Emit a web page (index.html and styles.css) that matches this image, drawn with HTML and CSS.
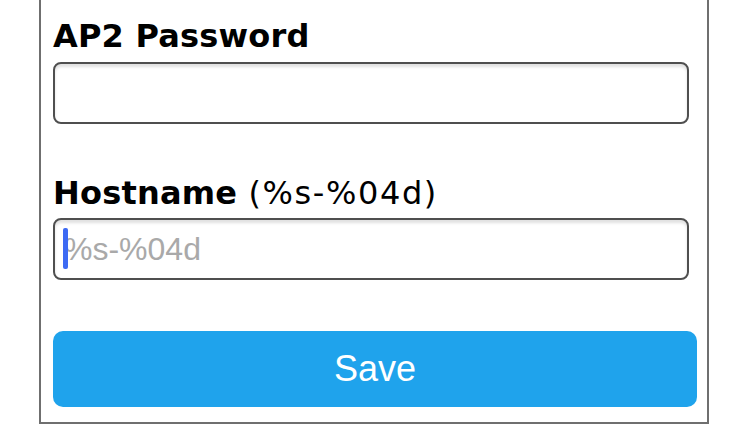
FILE: index.html
```html
<!DOCTYPE html>
<html lang="en">
<head>
    <meta charset="UTF-8">
    <meta name="viewport" content="width=device-width, initial-scale=1.0">
    <title>Config</title>
    <link rel="stylesheet" href="styles.css">
</head>
<body>
    <div class="wrap">
        <form class="config" method="get" action="wifisave">
            <label class="field-label" for="ap2pass">AP2 Password</label>
            <input type="password" id="ap2pass" name="ap2pass" class="field">

            <label class="field-label" for="host">Hostname <span class="hint">(%s-%04d)</span></label>
            <div class="field-box">
                <input type="text" id="host" name="host" class="field" placeholder="%s-%04d">
                <span class="caret"></span>
            </div>

            <button type="submit" class="save">Save</button>
        </form>
    </div>
</body>
</html>
```

FILE: styles.css
```css
body {
    margin: 0;
    padding: 0;
    background: #fff;
    font-family: "DejaVu Sans", Verdana, sans-serif;
}
.wrap {
    margin-left: 39px;
    width: 644px;
    padding: 18px 10px 15px 12px;
    border: 2px solid #6f6f6f;
    border-top: none;
}
.field-label {
    display: block;
    font-size: 32px;
    line-height: 37px;
    font-weight: bold;
    letter-spacing: 0.2px;
    color: #000;
    margin-bottom: 7px;
}
.field-label .hint {
    font-weight: normal;
    letter-spacing: 1.6px;
}
.field-box {
    position: relative;
}
.field-label + .field-box {
    margin-top: -1px;
}
.field {
    display: block;
    box-sizing: border-box;
    width: 636px;
    height: 62px;
    margin: 0 0 51px 0;
    padding: 0 9px;
    border: 2px solid #4f4f4f;
    border-radius: 8px;
    background: #fff;
    box-shadow: inset 0 3px 3px rgba(0,0,0,0.12);
    font-family: "Liberation Sans", Arial, sans-serif;
    font-size: 32px;
    color: #000;
    outline: none;
}
.field::placeholder {
    color: #a9a9a9;
}
.caret {
    position: absolute;
    left: 10px;
    top: 10px;
    width: 5px;
    height: 41px;
    border-radius: 2px;
    background: #3d6af3;
}
.save {
    display: block;
    width: 100%;
    height: 76px;
    margin: 0;
    padding: 0;
    border: none;
    border-radius: 10px;
    background: #1fa3ec;
    color: #fff;
    font-family: "Liberation Sans", Arial, sans-serif;
    font-size: 36px;
    cursor: pointer;
}
```
